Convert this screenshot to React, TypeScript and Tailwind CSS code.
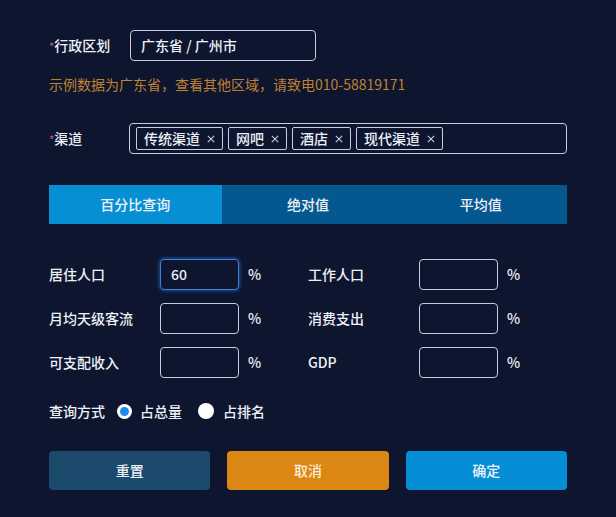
import React from "react";

const font = { fontFamily: '"Noto Sans CJK SC", "Noto Sans", sans-serif' };

function Tag({ text }: { text: string }) {
  return (
    <div className="flex h-[23px] items-center rounded-[2px] border border-[#c6cde0] px-[7px] text-[14px] font-medium text-[#eef1f7]">
      <span>{text}</span>
      <svg className="ml-[7px]" width="8" height="8" viewBox="0 0 8 8" fill="none">
        <path d="M0.8 0.8L7.2 7.2M7.2 0.8L0.8 7.2" stroke="#c9cfdd" strokeWidth="1.1" />
      </svg>
    </div>
  );
}

function Field({ label, value, active }: { label: string; value?: string; active?: boolean }) {
  return (
    <div className="flex h-[31px] items-center">
      <div className="w-[111px] text-[14px] font-medium text-[#eef1f7]">{label}</div>
      <div
        className={
          active
            ? "flex h-[31px] w-[79px] items-center rounded-[4px] border border-[#3d82d8] px-[10px] text-[14px] font-medium text-[#eef1f7] shadow-[0_0_4px_#2d6fc4]"
            : "flex h-[31px] w-[79px] items-center rounded-[4px] border border-[#c6cde0] px-[10px] text-[14px] text-[#eef1f7]"
        }
      >
        {value}
      </div>
      <div className="ml-[9px] text-[14px] font-medium text-[#eef1f7]">%</div>
    </div>
  );
}

export default function App() {
  return (
    <div className="min-h-[517px] w-[616px] bg-[#0d152f] px-[49px] pt-[30px]" style={font}>
      <div className="flex h-[31px] items-center">
        <div className="w-[81px] text-[14px] font-medium text-[#eef1f7]">
          <span className="text-[11px] text-[#c2506f]">*</span>行政区划
        </div>
        <div className="flex h-[31px] w-[186px] items-center rounded-[4px] border border-[#c6cde0] px-[10px] text-[14px] font-medium text-[#eef1f7]">
          广东省 / 广州市
        </div>
      </div>

      <div className="mt-[13px] text-[14px] leading-[20px] text-[#c2812f]">
        示例数据为广东省，查看其他区域，请致电010-58819171
      </div>

      <div className="mt-[29px] flex h-[31px] items-center">
        <div className="w-[80px] text-[14px] font-medium text-[#eef1f7]">
          <span className="text-[11px] text-[#c2506f]">*</span>渠道
        </div>
        <div className="flex h-[31px] w-[438px] items-center gap-[5px] rounded-[4px] border border-[#c6cde0] px-[6px]">
          <Tag text="传统渠道" />
          <Tag text="网吧" />
          <Tag text="酒店" />
          <Tag text="现代渠道" />
        </div>
      </div>

      <div className="mt-[31px] flex h-[39px] text-[14px] font-medium text-[#eef1f7]">
        <div className="flex flex-1 items-center justify-center bg-[#068fd3]">百分比查询</div>
        <div className="flex flex-1 items-center justify-center bg-[#05588f]">绝对值</div>
        <div className="flex flex-1 items-center justify-center bg-[#05588f]">平均值</div>
      </div>

      <div className="mt-[35px] grid grid-cols-2 gap-y-[13px]">
        <Field label="居住人口" value="60" active />
        <Field label="工作人口" />
        <Field label="月均天级客流" />
        <Field label="消费支出" />
        <Field label="可支配收入" />
        <Field label="GDP" />
      </div>

      <div className="mt-[23px] flex h-[20px] items-center text-[14px] font-medium text-[#eef1f7]">
        <span>查询方式</span>
        <span className="ml-[12px] flex h-[15px] w-[15px] items-center justify-center rounded-full bg-white">
          <span className="h-[9px] w-[9px] rounded-full bg-[#1d8ae8]" />
        </span>
        <span className="ml-[8px]">占总量</span>
        <span className="ml-[16px] h-[16px] w-[16px] rounded-full bg-white" />
        <span className="ml-[9px]">占排名</span>
      </div>

      <div className="mt-[30px] grid grid-cols-3 gap-[17px] text-[14px] font-medium">
        <div className="flex h-[39px] items-center justify-center rounded-[4px] bg-[#1b4a6d] text-[#eef1f7]">重置</div>
        <div className="flex h-[39px] items-center justify-center rounded-[4px] bg-[#dc8613] text-[#fbeedd]">取消</div>
        <div className="flex h-[39px] items-center justify-center rounded-[4px] bg-[#058ed5] text-[#eef6fb]">确定</div>
      </div>
    </div>
  );
}
